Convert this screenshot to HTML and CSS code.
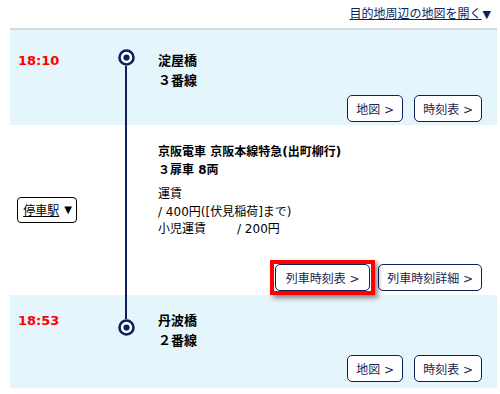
FILE: index.html
```html
<!DOCTYPE html>
<html lang="ja">
<head>
<meta charset="utf-8">
<title>経路</title>
<link rel="stylesheet" href="styles.css">
</head>
<body>
<div class="top"><a class="maplink" href="#">目的地周辺の地図を開く<span class="tri">▼</span></a></div>
<div class="route">
  <section class="row stop stop-dep">
    <div class="time">18:10</div>
    <div class="rail">
      <svg class="dot" width="17" height="17" viewBox="0 0 17 17"><circle cx="8.5" cy="8.5" r="7" fill="#fff" stroke="#0f1f5c" stroke-width="2.6"/><circle cx="8.5" cy="8.5" r="3.1" fill="#0f1f5c"/></svg>
      <span class="line"></span>
    </div>
    <div class="info">
      <div class="name">淀屋橋</div>
      <div class="track">３番線</div>
      <div class="btns"><a class="btn" href="#">地図 &gt;</a><a class="btn" href="#">時刻表 &gt;</a></div>
    </div>
  </section>
  <section class="row ride">
    <div class="stops"><button class="stopsbtn" type="button"><span class="u">停車駅</span><span class="stri">▼</span></button></div>
    <div class="rail"><span class="line"></span></div>
    <div class="info">
      <div class="train">京阪電車 京阪本線特急(出町柳行)</div>
      <div class="train">３扉車 8両</div>
      <div class="fare">
        <div>運賃</div>
        <div>/ 400円([伏見稲荷]まで)</div>
        <div><span class="lbl">小児運賃</span>/ 200円</div>
      </div>
      <div class="btns btns-ride"><a class="btn btn-hl" href="#">列車時刻表 &gt;</a><a class="btn" href="#">列車時刻詳細 &gt;</a></div>
    </div>
  </section>
  <section class="row stop stop-arr">
    <div class="time">18:53</div>
    <div class="rail">
      <span class="line line-top"></span>
      <svg class="dot" width="17" height="17" viewBox="0 0 17 17"><circle cx="8.5" cy="8.5" r="7" fill="#fff" stroke="#0f1f5c" stroke-width="2.6"/><circle cx="8.5" cy="8.5" r="3.1" fill="#0f1f5c"/></svg>
    </div>
    <div class="info">
      <div class="name">丹波橋</div>
      <div class="track">２番線</div>
      <div class="btns"><a class="btn" href="#">地図 &gt;</a><a class="btn" href="#">時刻表 &gt;</a></div>
    </div>
  </section>
</div>
</body>
</html>
```

FILE: styles.css
```css
html, body {
  margin: 0;
  padding: 0;
  background: #fff;
}
body {
  font-family: "DejaVu Sans", "Noto Sans CJK JP", sans-serif;
  font-size: 12px;
  color: #000;
  width: 500px;
  height: 394px;
  overflow: hidden;
}
.top {
  height: 28px;
  display: flex;
  justify-content: flex-end;
  align-items: center;
  padding-right: 9px;
}
.maplink {
  color: #0f1f5c;
  font-size: 12px;
  line-height: 16px;
  text-decoration: underline;
  margin-top: 1px;
}
.tri {
  font-size: 11px;
  display: inline-block;
  margin-left: 1px;
}
.route {
  margin: 0 3px 0 10px;
  border-top: 2px solid #d6d9dc;
}
.row {
  display: grid;
  grid-template-columns: 100px 32px 1fr;
}
.stop {
  background: #e4f5fb;
}
.time {
  color: #f00;
  font-weight: bold;
  font-size: 13px;
  line-height: 20px;
  padding-left: 8px;
}
.stop-dep .time, .stop-dep .info { padding-top: 21px; }
.stop-dep .info { padding-bottom: 3px; }
.stop-arr .time, .stop-arr .info { padding-top: 16px; }
.stop-arr .info { padding-bottom: 6px; }
.rail {
  display: flex;
  flex-direction: column;
  align-items: center;
}
.stop-dep .rail { padding-top: 19px; }
.line {
  width: 2px;
  background: #0f1f5c;
  flex: 1;
}
.line-top {
  flex: 0 0 24px;
}
.dot {
  display: block;
  flex: none;
}
.info {
  padding-left: 16px;
  padding-right: 15px;
  display: flex;
  flex-direction: column;
}
.name, .track {
  font-weight: bold;
  font-size: 13px;
  line-height: 20px;
}
.btns {
  display: flex;
  justify-content: flex-end;
  gap: 11px;
  margin-top: 4px;
}
.btn {
  display: flex;
  align-items: center;
  justify-content: center;
  height: 27px;
  box-sizing: border-box;
  padding: 0 8px;
  border: 1px solid #0f1f5c;
  border-radius: 5px;
  background: #fff;
  color: #1a2550;
  font-size: 12px;
  text-decoration: none;
  white-space: nowrap;
}
.ride .info {
  padding-top: 18px;
  padding-bottom: 4px;
}
.train {
  font-weight: bold;
  font-size: 12px;
  line-height: 18px;
}
.fare {
  margin-top: 7px;
  line-height: 17.5px;
  font-size: 12px;
}
.lbl {
  display: inline-block;
  width: 79px;
}
.btns-ride {
  gap: 8px;
  margin-top: 25px;
}
.btn-hl {
  min-width: 95px;
  position: relative;
}
.btn-hl::before {
  content: "";
  position: absolute;
  top: -5px;
  bottom: -5px;
  left: -6px;
  right: -6px;
  border: 4px solid #f00;
  box-shadow: 3px 3px 5px rgba(0, 0, 0, 0.45);
  pointer-events: none;
}
.stops {
  display: flex;
  align-items: center;
  padding-left: 7px;
}
.stopsbtn {
  height: 26px;
  width: 60px;
  padding: 0 0 0 1px;
  border: 1px solid #000;
  border-radius: 4px;
  background: #fff;
  font-family: "DejaVu Sans", "Noto Sans CJK JP", sans-serif;
  font-size: 12px;
  color: #000;
  white-space: nowrap;
  display: flex;
  align-items: center;
  justify-content: center;
}
.u {
  text-decoration: underline;
}
.stri {
  font-size: 10px;
  margin-left: 5px;
}
```
